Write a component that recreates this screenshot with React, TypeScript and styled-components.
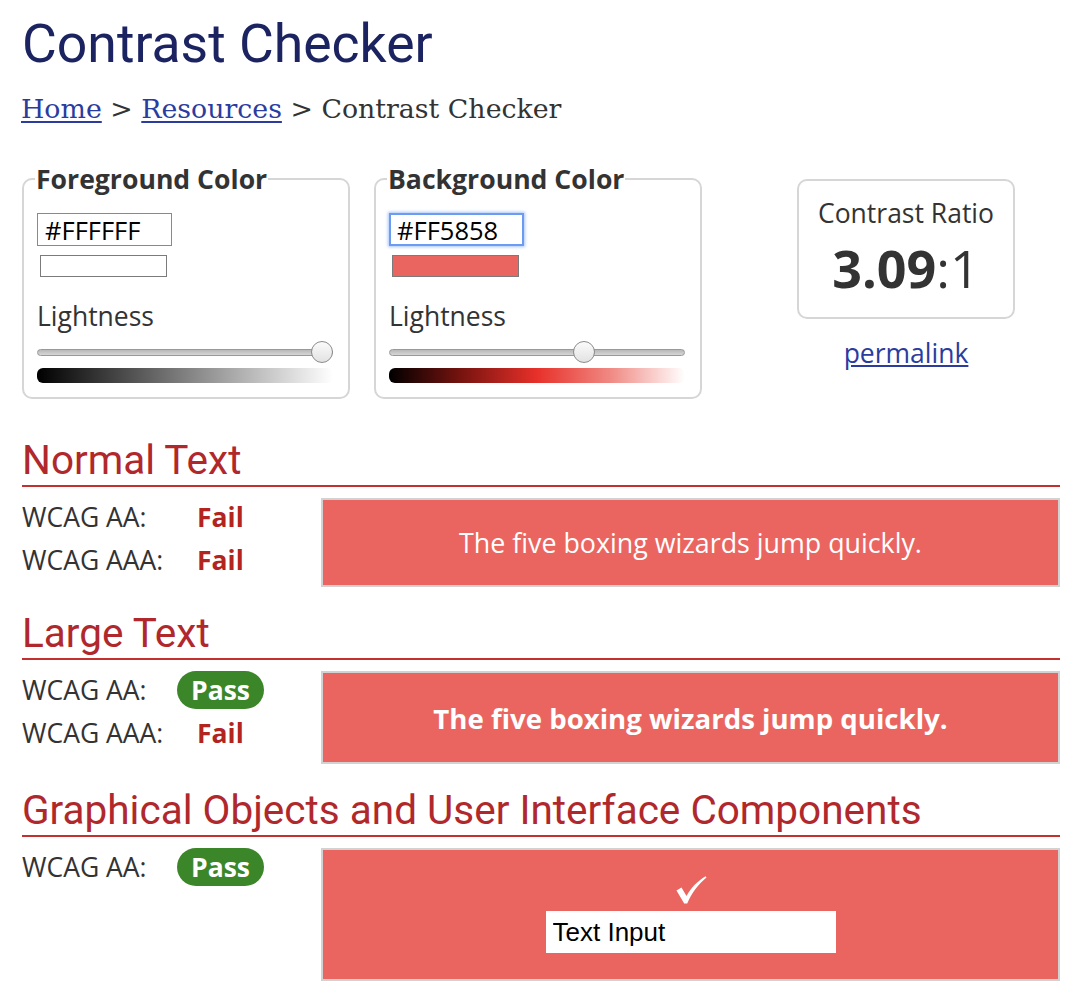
import React from "react";
import styled, { createGlobalStyle, css } from "styled-components";

const Global = createGlobalStyle`
  html, body { margin: 0; padding: 0; background: #fff; }
  body { font-family: "Open Sans", sans-serif; color: #333; }
`;

const Page = styled.main`
  padding: 12px 20px 0 22px;
`;

const Title = styled.h1`
  margin: 0;
  font-family: Roboto, sans-serif;
  font-weight: 400;
  font-size: 53.5px;
  line-height: 64px;
  color: #1c2361;
`;

const Crumbs = styled.nav`
  margin-top: 15px;
  margin-left: -1px;
  font-family: "DejaVu Serif", serif;
  font-size: 26.8px;
  line-height: 36px;
  color: #333;
  a {
    color: #2b3c9e;
    text-decoration: underline;
    text-underline-offset: 3px;
  }
`;

const TopRow = styled.div`
  display: flex;
  align-items: flex-start;
  margin-top: 34px;
`;

const ColorSet = styled.fieldset`
  box-sizing: border-box;
  width: 328px;
  min-width: 0;
  margin: 0 24px 0 0;
  padding: 16px 15px 14px 13px;
  border: 2px solid #d6d6d6;
  border-radius: 10px;
`;

const Legend = styled.legend`
  margin-left: -2px;
  padding: 0 1px;
  font-weight: 700;
  font-size: 26.6px;
  line-height: 36px;
  color: #333;
`;

const HexInput = styled.input<{ $focused?: boolean }>`
  display: block;
  box-sizing: border-box;
  width: 135px;
  height: 33px;
  margin: 0;
  padding: 0 7px;
  border: 1px solid #8a8a8a;
  border-radius: 0;
  outline: none;
  background: #fff;
  font-family: "Open Sans", sans-serif;
  font-size: 25.5px;
  color: #000;
  ${(p) =>
    p.$focused &&
    css`
      border: 2px solid #6b9cf1;
      box-shadow: 0 0 3px 1px #a9c5f7;
      padding: 0 6px;
    `}
`;

const Swatch = styled.div<{ $color: string }>`
  box-sizing: border-box;
  width: 127px;
  height: 22px;
  margin: 9px 0 0 3px;
  border: 1px solid #7b7b7b;
  background: ${(p) => p.$color};
`;

const FieldLabel = styled.div`
  margin-top: 21px;
  font-size: 26.5px;
  line-height: 36px;
  color: #333;
`;

const Slider = styled.div`
  position: relative;
  display: flex;
  align-items: center;
  height: 22px;
  margin-top: 7px;
`;

const Track = styled.div`
  flex: 1;
  box-sizing: border-box;
  height: 7px;
  border: 1px solid #999;
  border-radius: 4px;
  background: linear-gradient(#b8b8b8, #d6d6d6);
`;

const Thumb = styled.div`
  position: absolute;
  top: 0;
  box-sizing: border-box;
  width: 22px;
  height: 22px;
  border: 1px solid #8c8c8c;
  border-radius: 50%;
  background: linear-gradient(#fbfbfb, #e2e2e2);
`;

const Ramp = styled.div<{ $to: "gray" | "red" }>`
  height: 15px;
  margin-top: 5px;
  border-radius: 6px;
  background: ${(p) =>
    p.$to === "gray"
      ? "linear-gradient(to right, #000 0%, #808080 50%, #fff 100%)"
      : "linear-gradient(to right, #000 0%, #7a1410 25%, #e8302a 50%, #f08a84 75%, #fff 100%)"};
`;

const RatioColumn = styled.div`
  width: 218px;
  margin-left: 71px;
  text-align: center;
`;

const RatioBox = styled.div`
  box-sizing: border-box;
  height: 140px;
  margin-top: 18px;
  padding-top: 14px;
  border: 2px solid #d6d6d6;
  border-radius: 10px;
`;

const RatioLabel = styled.div`
  font-size: 26.5px;
  line-height: 36px;
  color: #333;
`;

const RatioValue = styled.div`
  margin-top: 7px;
  font-size: 52px;
  line-height: 60px;
  color: #333;
  b {
    font-weight: 700;
  }
`;

const Permalink = styled.a`
  display: inline-block;
  margin-top: 16px;
  font-size: 26.5px;
  line-height: 36px;
  color: #2b3c9e;
  text-decoration: underline;
`;

const Section = styled.section<{ $first?: boolean }>`
  margin-top: ${(p) => (p.$first ? "37px" : "22px")};
`;

const SectionTitle = styled.h2`
  margin: 0;
  padding-bottom: 1px;
  border-bottom: 2px solid #c2302f;
  font-family: Roboto, sans-serif;
  font-weight: 400;
  font-size: 40.5px;
  line-height: 48px;
  color: #b1282c;
`;

const Results = styled.div`
  display: grid;
  grid-template-columns: 299px 1fr;
  align-items: start;
  margin-top: 11px;
`;

const Levels = styled.div`
  margin-top: -3px;
`;

const Level = styled.div`
  display: flex;
  align-items: center;
  height: 43px;
  font-size: 26.5px;
  color: #333;
`;

const LevelName = styled.span`
  width: 155px;
  flex: none;
`;

const Fail = styled.span`
  margin-left: 20px;
  font-weight: 700;
  color: #b3241f;
`;

const Pass = styled.span`
  height: 38px;
  padding: 0 14px;
  border-radius: 19px;
  background: #3b8629;
  color: #fff;
  font-weight: 700;
  line-height: 38px;
`;

const Sample = styled.div<{ $h: number; $bold?: boolean }>`
  box-sizing: border-box;
  height: ${(p) => p.$h}px;
  display: flex;
  align-items: center;
  justify-content: center;
  border: 2px solid #d2d2d2;
  background: #eb6560;
  color: #fff;
  font-size: ${(p) => (p.$bold ? "27.6px" : "26.8px")};
  font-weight: ${(p) => (p.$bold ? 700 : 400)};
`;

const UiSample = styled(Sample)`
  flex-direction: column;
  justify-content: flex-start;
  padding-top: 26px;
`;

const CheckIcon = styled.svg`
  display: block;
  width: 31px;
  height: 28px;
  margin-left: 2px;
`;

const TextField = styled.input`
  box-sizing: border-box;
  width: 290px;
  height: 42px;
  margin: 7px 0 0;
  padding: 0 7px;
  border: none;
  border-radius: 0;
  outline: none;
  background: #fff;
  font-family: "Liberation Sans", Arial, sans-serif;
  font-size: 26px;
  color: #000;
`;

type Verdict = "pass" | "fail";

const Status = ({ v }: { v: Verdict }) =>
  v === "pass" ? <Pass>Pass</Pass> : <Fail>Fail</Fail>;

const ColorPanel = ({
  legend,
  hex,
  color,
  lightness,
  ramp,
  focused,
}: {
  legend: string;
  hex: string;
  color: string;
  lightness: number;
  ramp: "gray" | "red";
  focused?: boolean;
}) => (
  <ColorSet>
    <Legend>{legend}</Legend>
    <HexInput $focused={focused} defaultValue={hex} aria-label={legend} />
    <Swatch $color={color} />
    <FieldLabel>Lightness</FieldLabel>
    <Slider>
      <Track />
      <Thumb style={{ left: `calc(${lightness}% - ${(lightness / 100) * 22}px)` }} />
    </Slider>
    <Ramp $to={ramp} />
  </ColorSet>
);

export default function App() {
  return (
    <>
      <Global />
      <Page>
        <Title>Contrast Checker</Title>
        <Crumbs>
          <a href="#">Home</a> &gt; <a href="#">Resources</a> &gt; Contrast Checker
        </Crumbs>

        <TopRow>
          <ColorPanel legend="Foreground Color" hex="#FFFFFF" color="#ffffff" lightness={100} ramp="gray" />
          <ColorPanel legend="Background Color" hex="#FF5858" color="#eb6560" lightness={67} ramp="red" focused />
          <RatioColumn>
            <RatioBox>
              <RatioLabel>Contrast Ratio</RatioLabel>
              <RatioValue>
                <b>3.09</b>:1
              </RatioValue>
            </RatioBox>
            <Permalink href="#">permalink</Permalink>
          </RatioColumn>
        </TopRow>

        <Section $first>
          <SectionTitle>Normal Text</SectionTitle>
          <Results>
            <Levels>
              <Level>
                <LevelName>WCAG AA:</LevelName>
                <Status v="fail" />
              </Level>
              <Level>
                <LevelName>WCAG AAA:</LevelName>
                <Status v="fail" />
              </Level>
            </Levels>
            <Sample $h={89}>The five boxing wizards jump quickly.</Sample>
          </Results>
        </Section>

        <Section>
          <SectionTitle>Large Text</SectionTitle>
          <Results>
            <Levels>
              <Level>
                <LevelName>WCAG AA:</LevelName>
                <Status v="pass" />
              </Level>
              <Level>
                <LevelName>WCAG AAA:</LevelName>
                <Status v="fail" />
              </Level>
            </Levels>
            <Sample $h={93} $bold>
              The five boxing wizards jump quickly.
            </Sample>
          </Results>
        </Section>

        <Section>
          <SectionTitle>Graphical Objects and User Interface Components</SectionTitle>
          <Results>
            <Levels>
              <Level>
                <LevelName>WCAG AA:</LevelName>
                <Status v="pass" />
              </Level>
            </Levels>
            <UiSample $h={133}>
              <CheckIcon viewBox="0 0 31 28" aria-hidden="true">
                <path
                  d="M0.5 14.5 L5.5 11.5 L10.5 20 C15 12 21 5.5 29.5 0.3 L30.5 1.5 C22 8.5 16 16.5 11.2 27.5 L8.2 27.5 Z"
                  fill="#fff"
                />
              </CheckIcon>
              <TextField defaultValue="Text Input" aria-label="Text Input" />
            </UiSample>
          </Results>
        </Section>
      </Page>
    </>
  );
}
